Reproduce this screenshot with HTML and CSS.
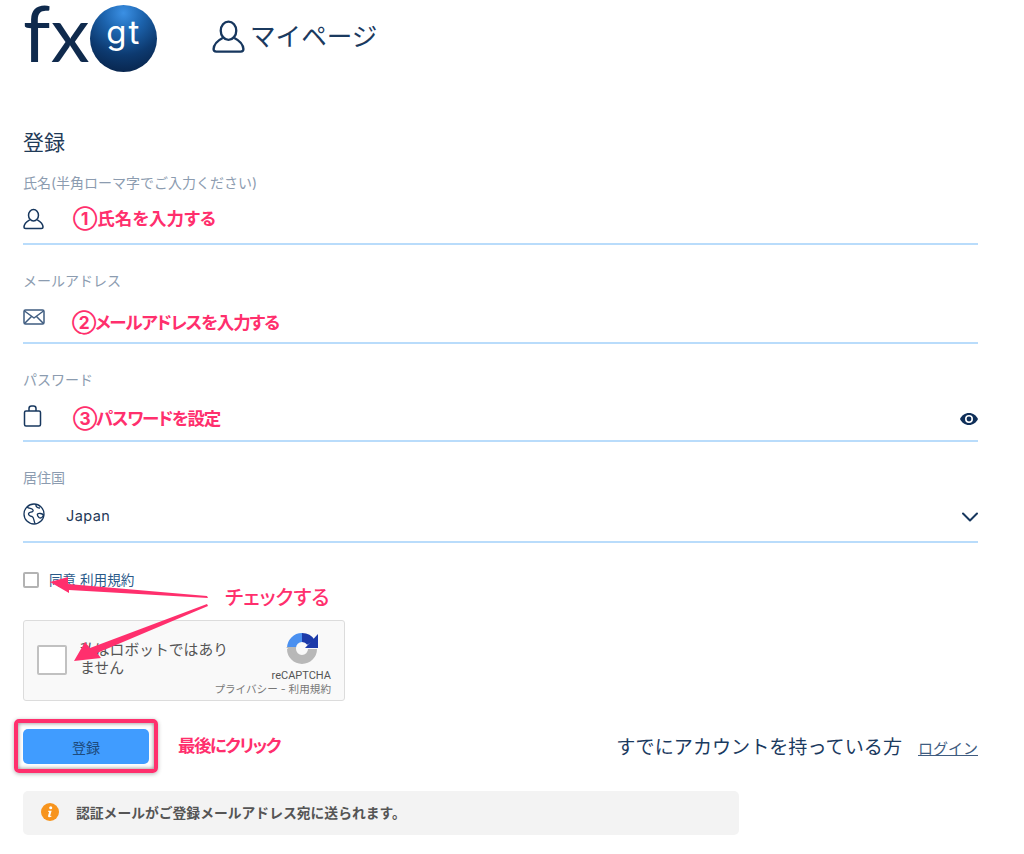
FILE: index.html
```html
<!DOCTYPE html>
<html lang="ja">
<head>
  <meta charset="utf-8" />
  <title>登録 - マイページ</title>
  <link rel="stylesheet" href="styles.css">
</head>
<body>
  <div class="page">
    <div class="header">
      <div class="logo">
        <span class="logo-fx">fx</span>
        <span class="logo-ball">gt</span>
      </div>
      <div class="mypage">
        <svg class="mypage-icon" viewBox="0 0 34 34" fill="none" stroke="#17375e" stroke-width="2.4" stroke-linejoin="round">
          <ellipse cx="17" cy="11" rx="8" ry="9.4"/>
          <path d="M11 18.5 C6 21 2 25 1.6 30 Q1.6 32.6 4.4 32.6 H29.6 Q32.4 32.6 32.4 30 C32 25 28 21 23 18.5"/>
        </svg>
        <span class="mypage-text">マイページ</span>
      </div>
    </div>

    <h2 class="title">登録</h2>

    <div class="field">
      <div class="field-label">氏名(半角ローマ字でご入力ください)</div>
      <div class="field-row">
        <svg class="icon icon-user" viewBox="0 0 22 22" fill="none" stroke="#17375e" stroke-width="1.6" stroke-linejoin="round">
          <ellipse cx="11" cy="7" rx="5.2" ry="6"/>
          <path d="M7 12 C3.5 14 1.2 16.500 1 19.500 Q1 21 2.800 21 H19.200 Q21 21 21 19.500 C20.800 16.500 18.500 14 15 12"/>
        </svg>
        <span class="note">①氏名を入力する</span>
      </div>
    </div>

    <div class="field">
      <div class="field-label">メールアドレス</div>
      <div class="field-row">
        <svg class="icon icon-mail" viewBox="0 0 22 16" fill="none" stroke="#3f5c80" stroke-width="1.5" stroke-linejoin="round">
          <rect x="1" y="1" width="20" height="14" rx="1.500"/>
          <path d="M1.500 2 L11 9 L20.500 2 M1.500 14.500 L8.500 7.500 M20.500 14.500 L13.500 7.500"/>
        </svg>
        <span class="note note-mail">②メールアドレスを入力する</span>
      </div>
    </div>

    <div class="field">
      <div class="field-label">パスワード</div>
      <div class="field-row">
        <svg class="icon icon-bag" viewBox="0 0 18 22" fill="none" stroke="#17375e" stroke-width="1.500" stroke-linejoin="round">
          <rect x="1" y="6" width="16" height="15" rx="1.500"/>
          <path d="M5.500 6 V3.500 Q5.500 1 8 1 H10 Q12.500 1 12.500 3.500 V6"/>
        </svg>
        <span class="note note-pass">③パスワードを設定</span>
        <svg class="eye" viewBox="0 0 18 12">
          <path fill="#0f2f59" fill-rule="evenodd" d="M9 0 C13 0 16.500 2.600 18 6 C16.500 9.400 13 12 9 12 C5 12 1.500 9.400 0 6 C1.500 2.600 5 0 9 0 Z M9 2 A4 4 0 1 0 9 10 A4 4 0 1 0 9 2 Z"/>
          <circle cx="9" cy="6" r="2.400" fill="#0f2f59"/>
        </svg>
      </div>
    </div>

    <div class="field">
      <div class="field-label">居住国</div>
      <div class="field-row field-row-tall">
        <svg class="icon icon-globe" viewBox="0 0 22 22" fill="none" stroke="#17375e" stroke-width="1.300" stroke-linejoin="round">
          <circle cx="11" cy="11" r="10"/>
          <path d="M4 4 C6 6 9 5 10 7 C11 9 7 9 6 10 C4.500 11.500 7 13.500 9 13.500 C11 14 10.500 17 12 20.500 M13 1.500 C12.500 4 15 5 17 5 M14.500 11 C16 9.800 19 10.500 20.500 12 C19.500 15 17.500 15.500 16 14.500 C15 13.500 14 12 14.500 11 Z"/>
        </svg>
        <span class="country">Japan</span>
        <svg class="chevron" viewBox="0 0 16 10" fill="none" stroke="#17375e" stroke-width="2" stroke-linecap="round" stroke-linejoin="round">
          <path d="M1 1.500 L8 8.500 L15 1.500"/>
        </svg>
      </div>
    </div>

    <label class="agree">
      <span class="agree-box"></span>
      <span class="agree-text">同意 利用規約</span>
    </label>

    <div class="captcha">
      <span class="captcha-box"></span>
      <span class="captcha-text">私はロボットではありません</span>
      <div class="captcha-brand">
        <svg class="captcha-logo" viewBox="0 0 32 32" fill="none" stroke-width="9">
          <path d="M5.500 16 A10.500 10.500 0 0 1 16 5.500" stroke="#4a90f0"/>
          <path d="M5.500 17 A10.500 10.500 0 0 0 26.500 17" stroke="#b8b8b8"/>
          <path d="M16 5.500 A10.500 10.500 0 0 1 25 10.500" stroke="#1c3aa9"/>
          <path d="M19 16 H32 V2 Z" fill="#1c3aa9"/>
          <path d="M0 15 H10 L10 24 Z" fill="#b8b8b8"/>
        </svg>
        <div class="captcha-name">reCAPTCHA</div>
        <div class="captcha-links">プライバシー - 利用規約</div>
      </div>
    </div>

    <div class="actions">
      <div class="actions-left">
        <div class="btn-mark"><button class="btn">登録</button></div>
        <span class="note note-click">最後にクリック</span>
      </div>
      <div class="actions-right">
        <span class="have-account">すでにアカウントを持っている方</span>
        <a class="login" href="#">ログイン</a>
      </div>
    </div>

    <div class="notice">
      <svg class="notice-icon" viewBox="0 0 20 20">
        <circle cx="10" cy="10" r="10" fill="#f7941d"/>
        <circle cx="10.800" cy="5.200" r="1.700" fill="#fff"/>
        <path d="M8 8.500 H11.800 L10.300 14 Q10.200 14.800 11.500 14.200 L11.700 15 Q10.200 16 8.800 15.900 Q7.500 15.700 7.900 14.300 L9 10 L7.900 9.700 Z" fill="#fff"/>
      </svg>
      <span>認証メールがご登録メールアドレス宛に送られます。</span>
    </div>

    <!-- 注釈の矢印 -->
    <svg class="arrows" viewBox="0 0 1024 854">
      <path class="arrow" d="M50 582 L68 577 L68 584 L207 596 L208 598 L69 590 L69 593 Z"/>
      <path class="arrow" d="M74 661 L85 642 L90 648 L207 604 L208 606 L97 653 L101 658 Z"/>
    </svg>
    <span class="note-check">チェックする</span>
  </div>
</body>
</html>
```

FILE: styles.css
```css
body {
  margin: 0;
  background: #fff;
  font-family: Inter, "Noto Sans CJK JP", sans-serif;
  color: #17375e;
}
.page {
  position: relative;
  padding: 0 46px 0 23px;
  height: 854px;
  overflow: hidden;
}
.header {
  display: flex;
  align-items: flex-start;
  height: 73px;
}
.logo {
  display: flex;
  align-items: flex-start;
  width: 189px;
}
.logo-fx {
  font-family: Lato, sans-serif;
  font-size: 78px;
  line-height: 64px;
  letter-spacing: 0.5px;
  color: #0f2a4d;
  height: 73px;
}
.logo-ball {
  width: 67px;
  height: 67px;
  margin-top: 5px;
  border-radius: 50%;
  background: radial-gradient(circle at 50% 12%, #3b90e4 0%, #1c63ad 30%, #0d3a70 62%, #071d3f 100%);
  color: #fff;
  font-family: Inter, sans-serif;
  font-weight: 400;
  font-size: 33px;
  letter-spacing: 2px;
  line-height: 54px;
  text-align: center;
}
.mypage {
  display: flex;
  align-items: center;
  gap: 5px;
  margin-top: 20px;
  font-size: 25.600px;
  color: #1b3a5f;
}
.mypage-icon {
  width: 33px;
  height: 33px;
}
.mypage-text {
  margin-top: -4px;
}
.title {
  margin: 55px 0 14.500px;
  font-size: 21px;
  font-weight: 400;
  line-height: 30px;
  color: #1f3a57;
}
.field {
  margin-bottom: 26px;
}
.field-label {
  font-size: 14px;
  line-height: 20px;
  color: #8c9cb0;
}
.field-row {
  display: flex;
  align-items: flex-start;
  height: 50.500px;
  border-bottom: 2px solid #b9dcfb;
}
.field-row-tall {
  height: 53px;
}
.icon {
  flex: none;
}
.icon-user {
  width: 21px;
  height: 22px;
  margin-top: 15px;
}
.icon-mail {
  width: 22px;
  height: 16px;
  margin-top: 18px;
}
.icon-bag {
  width: 19px;
  height: 22px;
  margin-top: 15px;
}
.icon-globe {
  width: 22px;
  height: 22px;
  margin-top: 15px;
}
.note {
  margin-left: 29px;
  margin-top: 15px;
  font-size: 17.500px;
  font-weight: 700;
  line-height: 22px;
  font-feature-settings: "palt";
  color: #ff2f6d;
}
.note-mail {
  margin-left: 27px;
  margin-top: 21px;
  letter-spacing: -1.150px;
}
.note-pass {
  margin-left: 31px;
  margin-top: 18px;
  letter-spacing: -1.300px;
}
.country {
  margin-left: 21px;
  margin-top: 17px;
  font-size: 14.500px;
  line-height: 22px;
  letter-spacing: 0.4px;
  color: #1f3a57;
}
.eye {
  width: 18px;
  height: 12px;
  margin: 23px 0 0 auto;
}
.chevron {
  width: 16px;
  height: 10px;
  margin: 24px 0 0 auto;
}
.agree {
  display: flex;
  align-items: center;
  gap: 10px;
  margin-top: 29px;
  height: 16px;
}
.agree-box {
  box-sizing: border-box;
  width: 16px;
  height: 16px;
  border: 2px solid #b3b3b3;
  border-radius: 2px;
}
.agree-text {
  margin-top: -2px;
  font-size: 13.600px;
  color: #2a5a8a;
}
.captcha {
  box-sizing: border-box;
  display: flex;
  align-items: flex-start;
  width: 322px;
  height: 81px;
  margin-top: 32px;
  padding: 24px 13px 0 13px;
  background: #f9f9f9;
  border: 1px solid #dcdcdc;
  border-radius: 3px;
  position: relative;
}
.captcha-box {
  box-sizing: border-box;
  flex: none;
  width: 30px;
  height: 30px;
  background: #fff;
  border: 2px solid #c1c1c1;
  border-radius: 2px;
}
.captcha-text {
  width: 150px;
  margin-left: 13px;
  margin-top: -4px;
  font-size: 14.800px;
  line-height: 18px;
  color: #555;
}
.captcha-brand {
  position: absolute;
  top: 11px;
  right: 13px;
  width: 130px;
  text-align: right;
}
.captcha-logo {
  display: block;
  width: 32px;
  height: 32px;
  margin: 0 13px 0 auto;
}
.captcha-name {
  margin-top: 5px;
  font-family: Roboto, sans-serif;
  font-size: 11px;
  line-height: 13px;
  color: #555;
}
.captcha-links {
  margin-top: 1px;
  font-size: 10.600px;
  line-height: 14px;
  color: #777;
  white-space: nowrap;
}
.actions {
  display: flex;
  justify-content: space-between;
  align-items: center;
  margin-top: 18px;
  height: 54px;
}
.actions-left {
  display: flex;
  align-items: center;
}
.btn-mark {
  margin-left: -9px;
  padding: 6px 5px 5px;
  border: 4px solid #ff2f6d;
  border-radius: 5px;
  box-shadow: inset 0 0 4px rgba(0,0,0,0.5), 0 1px 4px rgba(0,0,0,0.3);
}
.btn {
  display: block;
  width: 126px;
  height: 35px;
  padding: 0;
  border: 0;
  border-radius: 5px;
  background: #409cff;
  color: #1d4a7c;
  font-family: inherit;
  font-size: 14px;
}
.note-click {
  margin: 0 0 0 20px;
  letter-spacing: -1.600px;
}
.actions-right {
  display: flex;
  align-items: center;
  gap: 16px;
}
.have-account {
  font-size: 19.100px;
  color: #1b3a5f;
}
.login {
  margin-top: 3px;
  font-size: 15px;
  color: #3f5c80;
}
.notice {
  display: flex;
  align-items: center;
  gap: 17px;
  width: 716px;
  height: 44px;
  margin-top: 18px;
  padding: 0 0 3px 18px;
  box-sizing: border-box;
  background: #f3f3f3;
  border-radius: 5px;
  font-size: 13.800px;
  font-weight: 700;
  color: #555;
}
.notice-icon {
  width: 18px;
  height: 18px;
}
.arrows {
  position: absolute;
  top: 0;
  left: 0;
  width: 1024px;
  height: 854px;
  pointer-events: none;
}
.arrow {
  fill: #ff2f6d;
}
.note-check {
  position: absolute;
  left: 225px;
  top: 583px;
  font-size: 20px;
  font-weight: 500;
  line-height: 30px;
  font-feature-settings: "palt";
  color: #ff2f6d;
}
```
